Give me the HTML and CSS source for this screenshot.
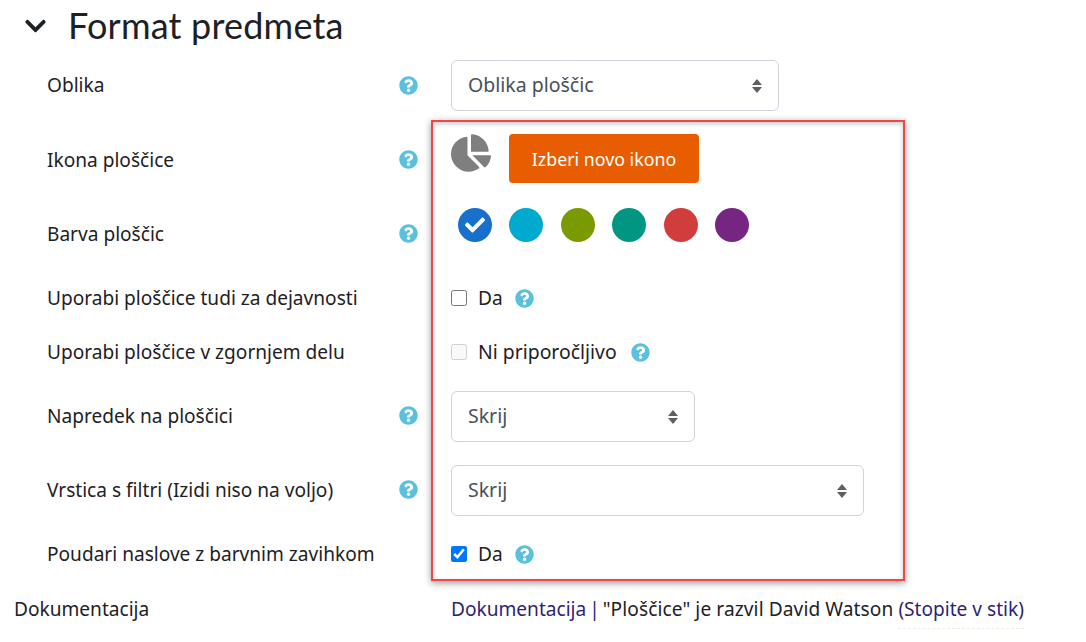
FILE: index.html
```html
<!DOCTYPE html>
<html lang="sl">
<head>
<meta charset="utf-8">
<title>Format predmeta</title>
<link rel="stylesheet" href="styles.css">
</head>
<body>
<svg class="defs" width="0" height="0" aria-hidden="true">
  <symbol id="q" viewBox="0 0 512 512"><path d="M504 256c0 136.997-111.043 248-248 248S8 392.997 8 256C8 119.083 119.043 8 256 8s248 111.083 248 248zM262.655 90c-54.497 0-89.255 22.957-116.549 63.758-3.536 5.286-2.353 12.415 2.715 16.258l34.699 26.31c5.205 3.947 12.621 3.008 16.665-2.122 17.864-22.658 30.113-35.797 57.303-35.797 20.429 0 45.698 13.148 45.698 32.958 0 14.976-12.363 22.667-32.534 33.976C247.128 238.528 216 254.941 216 296v4c0 6.627 5.373 12 12 12h56c6.627 0 12-5.373 12-12v-1.333c0-28.462 83.186-29.647 83.186-106.667 0-58.002-60.165-102-116.531-102zM256 338c-25.365 0-46 20.635-46 46 0 25.364 20.635 46 46 46s46-20.636 46-46c0-25.365-20.635-46-46-46z"/></symbol>
</svg>
<main class="page">
  <h2 class="title">
    <svg class="chevron" viewBox="0 0 448 512"><path d="M207.029 381.476L12.686 187.132c-9.373-9.373-9.373-24.569 0-33.941l22.667-22.667c9.357-9.357 24.522-9.375 33.901-.04L224 284.505l154.745-154.021c9.379-9.335 24.544-9.317 33.901.04l22.667 22.667c9.373 9.373 9.373 24.569 0 33.941L240.971 381.476c-9.373 9.372-24.569 9.372-33.942 0z"/></svg>
    <span>Format predmeta</span>
  </h2>

  <div class="row r1">
    <label class="lbl pad11">Oblika</label>
    <span class="help pad16"><svg class="q"><use href="#q"/></svg></span>
    <select class="sel w328"><option>Oblika ploščic</option></select>
  </div>

  <div class="row r2">
    <label class="lbl pad12">Ikona ploščice</label>
    <span class="help pad16"><svg class="q"><use href="#q"/></svg></span>
    <div class="icon-ctl">
      <svg class="pie" viewBox="0 0 544 512"><path d="M527.79 288H290.5l158.03 158.03c6.04 6.04 15.98 6.53 22.19.68 38.7-36.46 65.32-85.61 73.13-140.86 1.34-9.46-6.44-17.85-15.96-17.85zm-15.83-64.8C503.72 103.74 408.26 8.28 288.8.04 279.68-.59 272 7.1 272 16.24V240h223.77c9.14 0 16.82-7.68 16.19-16.8zM224 288V50.71c0-9.52-8.39-17.3-17.84-15.96C86.99 51.49-4.1 155.6.14 280.37 4.5 408.51 114.83 513.59 243.03 511.98c50.4-.63 96.97-16.87 135.26-44.03 7.9-5.6 8.42-17.23 1.57-24.08L224 288z"/></svg>
      <button class="btn" type="button">Izberi novo ikono</button>
    </div>
  </div>

  <div class="row r3">
    <label class="lbl pad12">Barva ploščic</label>
    <span class="help pad16"><svg class="q"><use href="#q"/></svg></span>
    <div class="swatches">
      <span class="dot c1"><svg class="tick" viewBox="0 0 512 512"><path d="M173.898 439.404l-166.4-166.4c-9.997-9.997-9.997-26.206 0-36.204l36.203-36.204c9.997-9.998 26.207-9.998 36.204 0L192 312.69 432.095 72.596c9.997-9.997 26.207-9.997 36.204 0l36.203 36.204c9.997 9.997 9.997 26.206 0 36.204l-294.4 294.401c-9.998 9.997-26.207 9.997-36.204-.001z"/></svg></span>
      <span class="dot c2"></span>
      <span class="dot c3"></span>
      <span class="dot c4"></span>
      <span class="dot c5"></span>
      <span class="dot c6"></span>
    </div>
  </div>

  <div class="row r4">
    <label class="lbl">Uporabi ploščice tudi za dejavnosti</label>
    <span class="help"></span>
    <div class="check"><input type="checkbox"><span>Da</span><svg class="q"><use href="#q"/></svg></div>
  </div>

  <div class="row r5">
    <label class="lbl">Uporabi ploščice v zgornjem delu</label>
    <span class="help"></span>
    <div class="check"><input type="checkbox" disabled><span class="wide">Ni priporočljivo</span><svg class="q"><use href="#q"/></svg></div>
  </div>

  <div class="row r6">
    <label class="lbl pad11">Napredek na ploščici</label>
    <span class="help pad15"><svg class="q"><use href="#q"/></svg></span>
    <select class="sel w244"><option>Skrij</option></select>
  </div>

  <div class="row r7">
    <label class="lbl pad11">Vrstica s filtri (Izidi niso na voljo)</label>
    <span class="help pad15"><svg class="q"><use href="#q"/></svg></span>
    <select class="sel w413"><option>Skrij</option></select>
  </div>

  <div class="row r8">
    <label class="lbl">Poudari naslove z barvnim zavihkom</label>
    <span class="help"></span>
    <div class="check"><input type="checkbox" checked><span>Da</span><svg class="q"><use href="#q"/></svg></div>
  </div>

  <div class="row doc">
    <span class="doc-lbl">Dokumentacija</span>
    <p class="doc-text"><a href="#">Dokumentacija</a> <span class="sep">|</span> <span class="mid">"Ploščice" je razvil David Watson</span> <a href="#" class="stik">(Stopite v stik)</a></p>
  </div>

  <div class="highlight"></div>
</main>
</body>
</html>
```

FILE: styles.css
```css
* { box-sizing: border-box; }
html, body { margin: 0; padding: 0; background: #fff; }
body {
  width: 1086px;
  height: 642px;
  overflow: hidden;
  font-family: "Noto Sans", "Open Sans", sans-serif;
  font-size: 19.1px;
  line-height: 28px;
  color: #1d2125;
}
.defs { position: absolute; }
.page { position: relative; height: 642px; }

.title {
  display: flex;
  align-items: center;
  height: 50px;
  margin: 0;
  padding-left: 25px;
  font-family: "Lato", sans-serif;
  font-weight: 400;
  font-size: 36px;
  letter-spacing: 0.2px;
  color: #1d2125;
}
.chevron { width: 21px; height: 24px; margin: 2px 22px 0 0; fill: #1d2125; }

.row { display: flex; align-items: flex-start; padding-left: 47px; }
.r1 { height: 51px; margin-top: 10px; }
.r2 { height: 49px; margin-top: 23px; }
.r3 { height: 34px; margin-top: 25px; }
.r4 { height: 28px; margin-top: 42px; }
.r5 { height: 28px; margin-top: 26px; }
.r6 { height: 51px; margin-top: 25px; }
.r7 { height: 51px; margin-top: 23px; }
.r8 { height: 28px; margin-top: 24px; }
.doc { height: 28px; margin-top: 27px; padding-left: 14px; }

.lbl { width: 352px; }
.help { width: 52px; display: flex; }
.pad11 { padding-top: 11px; }
.pad12 { padding-top: 12px; }
.pad15 { padding-top: 15px; }
.pad16 { padding-top: 16px; }
.q { width: 19px; height: 19px; fill: #5bc0de; flex: none; }

.sel {
  appearance: none;
  -webkit-appearance: none;
  height: 51px;
  padding: 0 40px 2px 16px;
  border: 1px solid #ced4da;
  border-radius: 6px;
  font: inherit;
  font-size: 19.5px;
  color: #495057;
  background: #fff url("data:image/svg+xml,%3Csvg xmlns='http://www.w3.org/2000/svg' width='12' height='16'%3E%3Cpath fill='%23606060' d='M6 1l5 6H1zM6 15L1 9h10z'/%3E%3C/svg%3E") no-repeat right 15px center;
}
.w328 { width: 328px; }
.w244 { width: 244px; }
.w413 { width: 413px; }

.icon-ctl { display: flex; align-items: flex-start; }
.pie { width: 40px; height: 38px; fill: #7f7f7f; }
.btn {
  width: 190px;
  height: 49px;
  margin-left: 18px;
  border: 0;
  border-radius: 4px;
  background: #e85d00;
  color: #fff;
  font: inherit;
  font-size: 17.8px;
}

.swatches { display: flex; gap: 17.4px; padding-left: 7px; }
.dot { width: 34px; height: 34px; border-radius: 50%; display: flex; align-items: center; justify-content: center; }
.c1 { background: #1670cc; }
.c2 { background: #00a9ce; }
.c3 { background: #7a9a01; }
.c4 { background: #009681; }
.c5 { background: #d13c3c; }
.c6 { background: #772583; }
.tick { width: 20px; height: 20px; fill: #fff; }

.check { display: flex; align-items: center; height: 28px; }
.check input { width: 16px; height: 16px; margin: 0 11px 0 0; }
.check .q { margin-left: 12px; }
.check .wide { font-size: 19.4px; margin-right: 2px; }

.doc-lbl { width: 437px; }
.doc-text { margin: 0; white-space: nowrap; }
.doc-text a { color: #2d1f78; text-decoration: none; }
.sep { color: #2d1f78; margin: 0 -2px; }
.mid { letter-spacing: 0.1px; }
.stik { border-bottom: 1px dashed #f6e9df; padding-bottom: 6px; }

.highlight {
  position: absolute;
  left: 431px;
  top: 120px;
  width: 474px;
  height: 461px;
  border: 2px solid #f04848;
  box-shadow: 0 2px 7px rgba(0, 0, 0, 0.4), inset 0 2px 5px rgba(0, 0, 0, 0.2);
  pointer-events: none;
}
```
